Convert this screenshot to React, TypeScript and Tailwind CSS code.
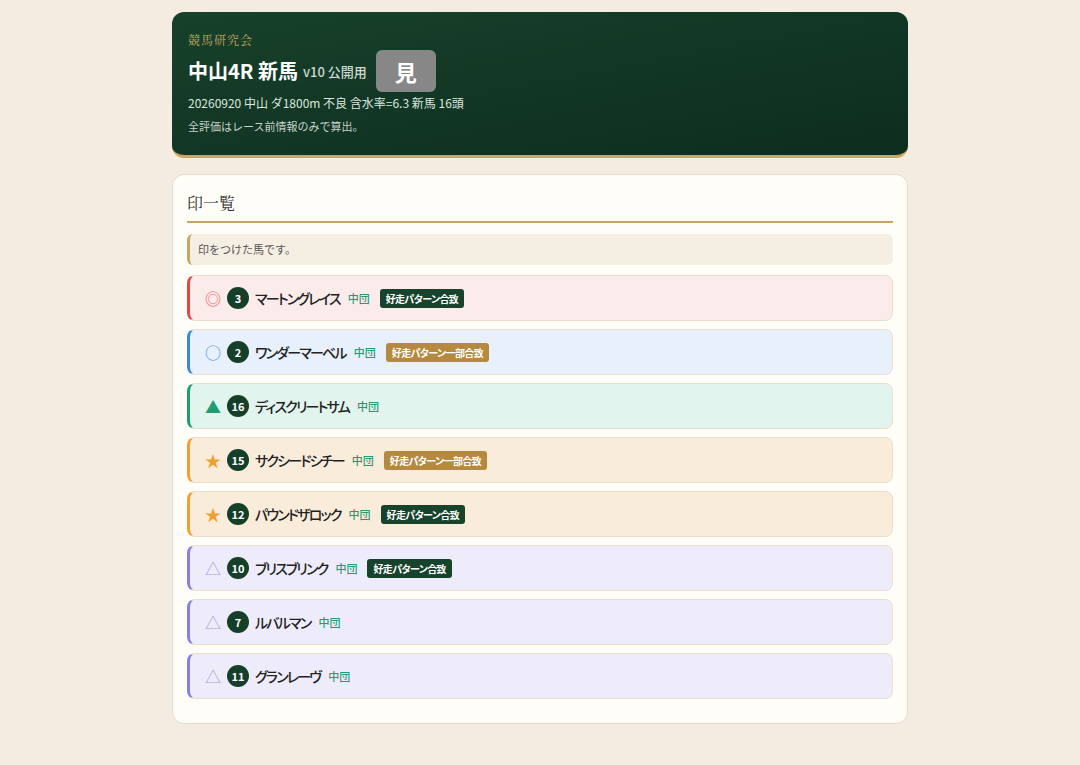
const font = { fontFamily: '"Noto Sans CJK JP", "Noto Sans", sans-serif' };

type Mark = "honmei" | "taikou" | "tanana" | "hoshi" | "renka";

interface Horse {
  mark: Mark;
  num: number;
  name: string;
  pos: string;
  badge?: "full" | "part";
}

const horses: Horse[] = [
  { mark: "honmei", num: 3, name: "マートングレイス", pos: "中団", badge: "full" },
  { mark: "taikou", num: 2, name: "ワンダーマーベル", pos: "中団", badge: "part" },
  { mark: "tanana", num: 16, name: "ディスクリートサム", pos: "中団" },
  { mark: "hoshi", num: 15, name: "サクシードシチー", pos: "中団", badge: "part" },
  { mark: "hoshi", num: 12, name: "パウンドザロック", pos: "中団", badge: "full" },
  { mark: "renka", num: 10, name: "ブリスブリンク", pos: "中団", badge: "full" },
  { mark: "renka", num: 7, name: "ルバルマン", pos: "中団" },
  { mark: "renka", num: 11, name: "グランレーヴ", pos: "中団" },
];

const markStyle: Record<Mark, { glyph: string; row: string; text: string }> = {
  honmei: { glyph: "◎", row: "bg-[#fcebeb] border-l-[#e04848]", text: "text-[#e05a5a]" },
  taikou: { glyph: "○", row: "bg-[#e7f0fb] border-l-[#3b86d6]", text: "text-[#4a8fdc]" },
  tanana: { glyph: "▲", row: "bg-[#e1f4ed] border-l-[#1f9c72]", text: "text-[#1f9c72]" },
  hoshi: { glyph: "★", row: "bg-[#faecda] border-l-[#f0a030]", text: "text-[#f0a030]" },
  renka: { glyph: "△", row: "bg-[#eeecfb] border-l-[#8a7fdc]", text: "text-[#a79de0]" },
};

const palt = { fontFeatureSettings: '"palt"' };

function HorseRow({ horse }: { horse: Horse }) {
  const m = markStyle[horse.mark];
  return (
    <div
      className={`flex h-[46px] items-center rounded-lg border border-[#ecdfcb] border-l-[3px] pl-[15px] ${m.row}`}
    >
      <span className={`w-[14px] text-center text-[16px] leading-none ${m.text}`}>{m.glyph}</span>
      <span className="ml-[8px] flex h-[22px] w-[22px] items-center justify-center rounded-full bg-[#163f2a] text-[11px] font-bold text-white">
        {horse.num}
      </span>
      <span className="ml-[6px] text-[14px] font-medium tracking-[-1.8px] text-[#222]" style={palt}>
        {horse.name}
      </span>
      <span className="ml-[8px] text-[11px] font-medium text-[#1f9c72]">{horse.pos}</span>
      {horse.badge === "full" && (
        <span
          className="ml-[10px] rounded-[3px] bg-[#17432c] px-[6px] py-[2px] text-[10px] font-bold tracking-[-0.6px] text-white"
          style={palt}
        >
          好走パターン合致
        </span>
      )}
      {horse.badge === "part" && (
        <span
          className="ml-[10px] rounded-[3px] bg-[#b58a3e] px-[6px] py-[2px] text-[10px] font-bold tracking-[-0.6px] text-white"
          style={palt}
        >
          好走パターン一部合致
        </span>
      )}
    </div>
  );
}

export default function App() {
  return (
    <div className="min-h-[765px] bg-[#f4ece0] pt-3 pb-10" style={font}>
      <div className="mx-auto w-[736px]">
        <header className="rounded-xl border-b-[3px] border-[#c9a662] bg-gradient-to-br from-[#17412b] to-[#0d2d1e] px-4 pt-5 pb-[21px]">
          <div
            className="text-[12px] leading-4 tracking-[1px] text-[#c9a662]"
            style={{ fontFamily: '"Noto Serif CJK JP", "Liberation Serif", serif' }}
          >
            競馬研究会
          </div>
          <div className="mt-[2px] flex items-center">
            <h1 className="text-[20px] font-bold leading-7 text-white">中山4R 新馬</h1>
            <span className="ml-[5px] mt-[2px] text-[13px] font-medium text-[#cfd8d2]">v10 公開用</span>
            <span className="ml-[9px] flex h-[42px] w-[60px] items-center justify-center rounded-md bg-[#878787] text-[22px] font-bold text-white">
              見
            </span>
          </div>
          <div className="mt-[2px] text-[12px] leading-[18px] text-[#dbe5de]">
            20260920 中山 ダ1800m 不良 含水率=6.3 新馬 16頭
          </div>
          <div className="mt-[6px] text-[11px] leading-4 text-[#c4d0c8]">全評価はレース前情報のみで算出。</div>
        </header>

        <section className="mt-4 rounded-xl border border-[#e6dccb] bg-[#fffdf8] px-[14px] pt-4 pb-6">
          <h2
            className="border-b-2 border-[#c9a662] pb-[6px] text-[16px] leading-6 text-[#2a2a2a]"
            style={{ fontFamily: '"Noto Serif CJK JP", "Liberation Serif", serif' }}
          >
            印一覧
          </h2>
          <div className="mt-[11px] flex h-[31px] items-center rounded-md border-l-[3px] border-[#c9a662] bg-[#f5eee2] pl-[8px] text-[11px] text-[#555]">
            印をつけた馬です。
          </div>
          <div className="mt-[10px] flex flex-col gap-2">
            {horses.map((h) => (
              <HorseRow key={h.num} horse={h} />
            ))}
          </div>
        </section>
      </div>
    </div>
  );
}
